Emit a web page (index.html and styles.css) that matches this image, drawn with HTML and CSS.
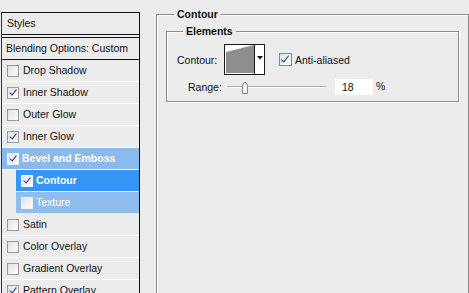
FILE: index.html
```html
<!DOCTYPE html>
<html>
<head>
<meta charset="utf-8">
<link rel="stylesheet" href="styles.css">
</head>
<body>
<div class="page">
  <div class="list">
    <div class="head">Styles</div>
    <div class="head blend">Blending Options: Custom</div>
    <div class="row"><span class="cb"></span>Drop Shadow</div>
    <div class="row"><span class="cb on"></span>Inner Shadow</div>
    <div class="row"><span class="cb"></span>Outer Glow</div>
    <div class="row"><span class="cb on"></span>Inner Glow</div>
    <div class="row sel-parent"><span class="cb on"></span>Bevel and Emboss</div>
    <div class="row sub sel"><span class="cb on"></span>Contour</div>
    <div class="row sub sel-light"><span class="cb"></span>Texture</div>
    <div class="row"><span class="cb"></span>Satin</div>
    <div class="row"><span class="cb"></span>Color Overlay</div>
    <div class="row"><span class="cb"></span>Gradient Overlay</div>
    <div class="row"><span class="cb on"></span>Pattern Overlay</div>
  </div>
  <div class="group">
    <div class="gtitle outer-t"><span>Contour</span></div>
    <div class="inner">
      <div class="gtitle inner-t"><span>Elements</span></div>
      <div class="line1">
        <span class="lbl">Contour:</span>
        <div class="graph">
          <svg class="curve" width="29" height="29" viewBox="0 0 29 29"><polygon points="1,28 1,7 29,0 29,28" fill="#8e8e8e"/></svg>
          <div class="drop"><svg width="6" height="4" viewBox="0 0 6 4"><polygon points="0,0 6,0 3,3.5" fill="#111"/></svg></div>
        </div>
        <span class="cb on big"></span><span class="aa">Anti-aliased</span>
      </div>
      <div class="line2">
        <span class="rlbl">Range:</span>
        <div class="slider">
          <div class="track"></div>
          <svg class="thumb" width="8" height="13" viewBox="0 0 8 13"><path d="M1.5 12.5 V4 L4 1 L6.5 4 V12.5 Z" fill="#f4f4f4" stroke="#8a8a8a"/></svg>
        </div>
        <span class="num">18</span><span class="pct">%</span>
      </div>
    </div>
  </div>
</div>
</body>
</html>
```
FILE: styles.css
```css
html, body { margin: 0; padding: 0; }
body {
  background: #ececec;
  font-family: "Liberation Sans", Arial, sans-serif;
  font-size: 10.5px;
  color: #111;
  width: 469px;
  height: 293px;
  overflow: hidden;
}
.page {
  display: flex;
  align-items: flex-start;
  padding: 12px 0 0 1px;
}
.list {
  width: 137px;
  border-left: 1px solid #333;
  border-right: 1px solid #111;
  flex: none;
}
.head {
  height: 20px;
  padding-bottom: 1px;
  border-top: 1px solid #111;
  border-bottom: 1px solid #111;
  display: flex;
  align-items: center;
  padding-left: 5px;
}
.head.blend {
  margin-top: 2px;
  padding-left: 4px;
}
.row {
  height: 20px;
  padding-bottom: 1px;
  border-bottom: 1px solid #fbfbfb;
  display: flex;
  align-items: center;
  padding-left: 5px;
}
.row.sub {
  margin-left: 14px;
  padding-left: 5px;
  border-bottom-color: #e6eef8;
}
.sel-parent { background: #8ab9ec; color: #fff; font-weight: bold; }
.sel { background: #3497f6; color: #fff; font-weight: bold; }
.sel-light { background: #8fbdee; color: #fff; }
.cb {
  width: 10px;
  height: 10px;
  border: 1px solid #9a9a9a;
  background: linear-gradient(135deg, #e2e2e2, #fdfdfd);
  margin-right: 4px;
  margin-top: 1px;
  flex: none;
  position: relative;
}
.sel .cb, .sel-parent .cb, .sel-light .cb { border-color: #eef4fb; margin-right: 3px; }
.cb.on::after {
  content: "";
  position: absolute;
  left: 3px;
  top: 0px;
  width: 3px;
  height: 6px;
  border: solid #2a3a88;
  border-width: 0 1.5px 1.5px 0;
  transform: rotate(38deg);
}
.group {
  flex: 1;
  margin: 2px 0 0 16px;
  height: 300px;
  border: 1px solid #8c8c8c;
  border-bottom: none;
  box-shadow: inset 1px 1px 0 #fcfcfc;
  padding: 0 9px;
}
.gtitle {
  height: 13px;
  margin-top: -7px;
  line-height: 13px;
  font-weight: bold;
}
.outer-t { padding-left: 8px; }
.inner-t { padding-left: 6px; }
.gtitle span {
  background: #ececec;
  padding: 0 3px;
}
.inner {
  margin-top: 10px;
  height: 69px;
  border: 1px solid #8c8c8c;
  box-shadow: inset 1px 1px 0 #fcfcfc, 1px 1px 0 #fcfcfc;
  padding: 0 0 0 10px;
}
.line1 {
  display: flex;
  align-items: center;
  margin-top: 6px;
  height: 31px;
}
.lbl { width: 47px; flex: none; }
.graph {
  width: 39px;
  height: 29px;
  border: 1px solid #1a1a1a;
  background: #fff;
  display: flex;
  flex: none;
}
.curve { display: block; }
.drop {
  flex: 1;
  border-left: 1px solid #1a1a1a;
  display: flex;
  align-items: center;
  justify-content: center;
  padding-bottom: 3px;
}
.drop svg { display: block; }
.cb.big {
  width: 11px;
  height: 11px;
  margin-top: 0;
  margin-left: 14px;
  margin-right: 3px;
  border-color: #7a8aa8;
}
.cb.big.on::after { left: 3px; top: 0; height: 7px; }
.line2 {
  display: flex;
  align-items: center;
  margin-top: 4px;
  height: 16px;
  padding-left: 11px;
}
.rlbl { width: 39px; flex: none; }
.slider {
  width: 99px;
  height: 13px;
  display: flex;
  align-items: center;
  flex: none;
}
.track {
  width: 99px;
  height: 1px;
  background: #a9a9a9;
  border-bottom: 1px solid #fff;
}
.thumb {
  display: block;
  margin-left: -85px;
}
.num {
  margin-left: 9px;
  width: 31px;
  height: 16px;
  background: #fff;
  padding-left: 7px;
  line-height: 17px;
  flex: none;
}
.pct { margin-left: 3px; margin-top: -3px; }
```
